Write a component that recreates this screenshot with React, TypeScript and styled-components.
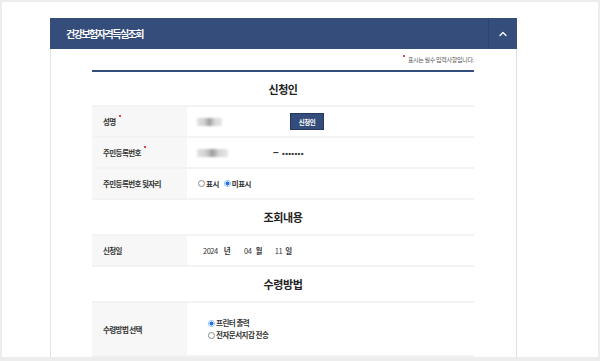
import styled, { createGlobalStyle } from "styled-components";
import { ChevronUp } from "lucide-react";

const GlobalStyle = createGlobalStyle`
  html, body {
    margin: 0;
    padding: 0;
    background: #ededed;
    font-family: "Noto Sans CJK KR", "Noto Sans", sans-serif;
    color: #222;
  }
`;

const Page = styled.div`
  margin: 2px 2px 0 2px;
  height: 355px;
  background: #fff;
  padding: 16px 0 0 48px;
  box-sizing: border-box;
  overflow: hidden;
`;

const Panel = styled.section`
  width: 467px;
  height: 339px;
  border-left: 1px solid #e2e2e2;
  border-right: 1px solid #e2e2e2;
  box-sizing: border-box;
  display: flex;
  flex-direction: column;
`;

const PanelHeader = styled.header`
  height: 31px;
  margin: 0 -1px;
  background: #344d7a;
  display: flex;
  align-items: center;
  justify-content: space-between;
`;

const PanelTitle = styled.h2`
  margin: 0 0 0 16px;
  font-size: 10px;
  font-weight: 700;
  letter-spacing: -1.5px;
  color: #fff;
`;

const Toggle = styled.button`
  width: 29px;
  height: 31px;
  border: 0;
  border-left: 1px solid #2c4470;
  background: transparent;
  color: #fff;
  display: flex;
  align-items: center;
  justify-content: center;
  padding: 0;
`;

const PanelBody = styled.div`
  padding: 0 42px 0 41px;
`;

const Note = styled.p`
  margin: 0;
  height: 21px;
  display: flex;
  align-items: center;
  justify-content: flex-end;
  font-size: 6px;
  letter-spacing: -0.3px;
  color: #555;
`;

const Required = styled.span<{ $after?: boolean }>`
  display: inline-block;
  width: 2px;
  height: 2px;
  margin: ${(p) => (p.$after ? "0 0 0 3px" : "0 3px 0 0")};
  background: #e60012;
  border-radius: 1px;
  position: relative;
  top: ${(p) => (p.$after ? -6 : -4)}px;
`;

const Form = styled.div`
  border-top: 2px solid #344d7a;
`;

const SectionTitle = styled.h3<{ $first?: boolean }>`
  margin: 0;
  height: ${(p) => (p.$first ? 33 : 34)}px;
  display: flex;
  align-items: center;
  justify-content: center;
  font-size: 11px;
  font-weight: 700;
  letter-spacing: -0.4px;
  color: #222;
`;

const Table = styled.div`
  border-top: 2px solid #f3f3f3;
`;

const Row = styled.div<{ $tall?: boolean }>`
  display: grid;
  grid-template-columns: 95px 1fr;
  min-height: ${(p) => (p.$tall ? 52 : 29)}px;
  border-bottom: 2px solid #f3f3f3;
`;

const Label = styled.div`
  background: #f7f7f7;
  display: flex;
  align-items: center;
  padding-left: 11px;
  font-size: 7.5px;
  font-weight: 700;
  letter-spacing: -0.6px;
  color: #333;
`;

const Value = styled.div`
  display: flex;
  align-items: center;
  padding-left: 10px;
  font-size: 7.5px;
  font-weight: 700;
  letter-spacing: -0.5px;
  color: #333;
`;

const Blur = styled.span<{ $w: number }>`
  display: inline-block;
  width: ${(p) => p.$w}px;
  height: 8px;
  background: linear-gradient(90deg, #e4e4e4 0%, #cfcfcf 30%, #9d9d9d 50%, #d6d6d6 70%, #e8e8e8 100%);
  filter: blur(0.8px);
`;

const NameField = styled.span`
  width: 93px;
  display: inline-flex;
`;

const IdField = styled.span`
  width: 76px;
  display: inline-flex;
`;

const SmallButton = styled.button`
  width: 34px;
  height: 17px;
  padding: 0;
  border: 1px solid #24395f;
  background: #344d7a;
  color: #fff;
  font-family: inherit;
  font-size: 6.5px;
  font-weight: 700;
  letter-spacing: -0.4px;
`;

const Dash = styled.span`
  font-family: "Liberation Sans", Arial, sans-serif;
  font-size: 10px;
  font-weight: 700;
  margin-right: 4px;
`;

const Dots = styled.span`
  font-family: "Liberation Sans", Arial, sans-serif;
  font-size: 8px;
  font-weight: 700;
  letter-spacing: 0.3px;
  position: relative;
  top: 1px;
`;

const RadioGroup = styled.div<{ $column?: boolean }>`
  display: flex;
  flex-direction: ${(p) => (p.$column ? "column" : "row")};
  gap: ${(p) => (p.$column ? "2px" : "5px")};
  padding-left: ${(p) => (p.$column ? "11px" : "1px")};
`;

const RadioItem = styled.label`
  display: inline-flex;
  align-items: center;
  gap: 1px;
  line-height: 10px;
`;

const Dot = styled.span<{ $on?: boolean }>`
  width: 7px;
  height: 7px;
  box-sizing: border-box;
  border-radius: 50%;
  border: 1px solid ${(p) => (p.$on ? "#8cb8f5" : "#8a8a8a")};
  background: ${(p) => (p.$on ? "radial-gradient(circle, #1a73e8 0 1.8px, #fff 2.2px)" : "#fff")};
`;

const DateText = styled.span<{ $gap: number }>`
  margin-right: ${(p) => p.$gap}px;
`;

const DateNum = styled(DateText)`
  font-weight: 400;
  color: #333;
`;

const DateWrap = styled.div`
  padding-left: 6px;
  display: flex;
  align-items: center;
`;

const Radio = ({ on, label }: { on?: boolean; label: string }) => (
  <RadioItem>
    <Dot $on={on} />
    {label}
  </RadioItem>
);

const App = () => (
  <>
    <GlobalStyle />
    <Page>
      <Panel>
        <PanelHeader>
          <PanelTitle>건강보험자격득실조회</PanelTitle>
          <Toggle>
            <ChevronUp size={12} strokeWidth={2.6} />
          </Toggle>
        </PanelHeader>
        <PanelBody>
          <Note>
            <Required />
            표시는 필수 입력사항입니다.
          </Note>
          <Form>
            <SectionTitle $first>신청인</SectionTitle>
            <Table>
              <Row>
                <Label>
                  성명
                  <Required $after />
                </Label>
                <Value>
                  <NameField>
                    <Blur $w={25} />
                  </NameField>
                  <SmallButton>신청인</SmallButton>
                </Value>
              </Row>
              <Row>
                <Label>
                  주민등록번호
                  <Required $after />
                </Label>
                <Value>
                  <IdField>
                    <Blur $w={31} />
                  </IdField>
                  <Dash>–</Dash>
                  <Dots>•••••••</Dots>
                </Value>
              </Row>
              <Row>
                <Label>주민등록번호 뒷자리</Label>
                <Value>
                  <RadioGroup>
                    <Radio label="표시" />
                    <Radio on label="미표시" />
                  </RadioGroup>
                </Value>
              </Row>
            </Table>
            <SectionTitle>조회내용</SectionTitle>
            <Table>
              <Row>
                <Label>신청일</Label>
                <Value>
                  <DateWrap>
                    <DateNum $gap={6}>2024</DateNum>
                    <DateText $gap={14}>년</DateText>
                    <DateNum $gap={4}>04</DateNum>
                    <DateText $gap={13}>월</DateText>
                    <DateNum $gap={3}>11</DateNum>
                    <DateText $gap={0}>일</DateText>
                  </DateWrap>
                </Value>
              </Row>
            </Table>
            <SectionTitle>수령방법</SectionTitle>
            <Table>
              <Row $tall>
                <Label>수령방법 선택</Label>
                <Value>
                  <RadioGroup $column>
                    <Radio on label="프린터 출력" />
                    <Radio label="전자문서지갑 전송" />
                  </RadioGroup>
                </Value>
              </Row>
            </Table>
          </Form>
        </PanelBody>
      </Panel>
    </Page>
  </>
);

export default App;
